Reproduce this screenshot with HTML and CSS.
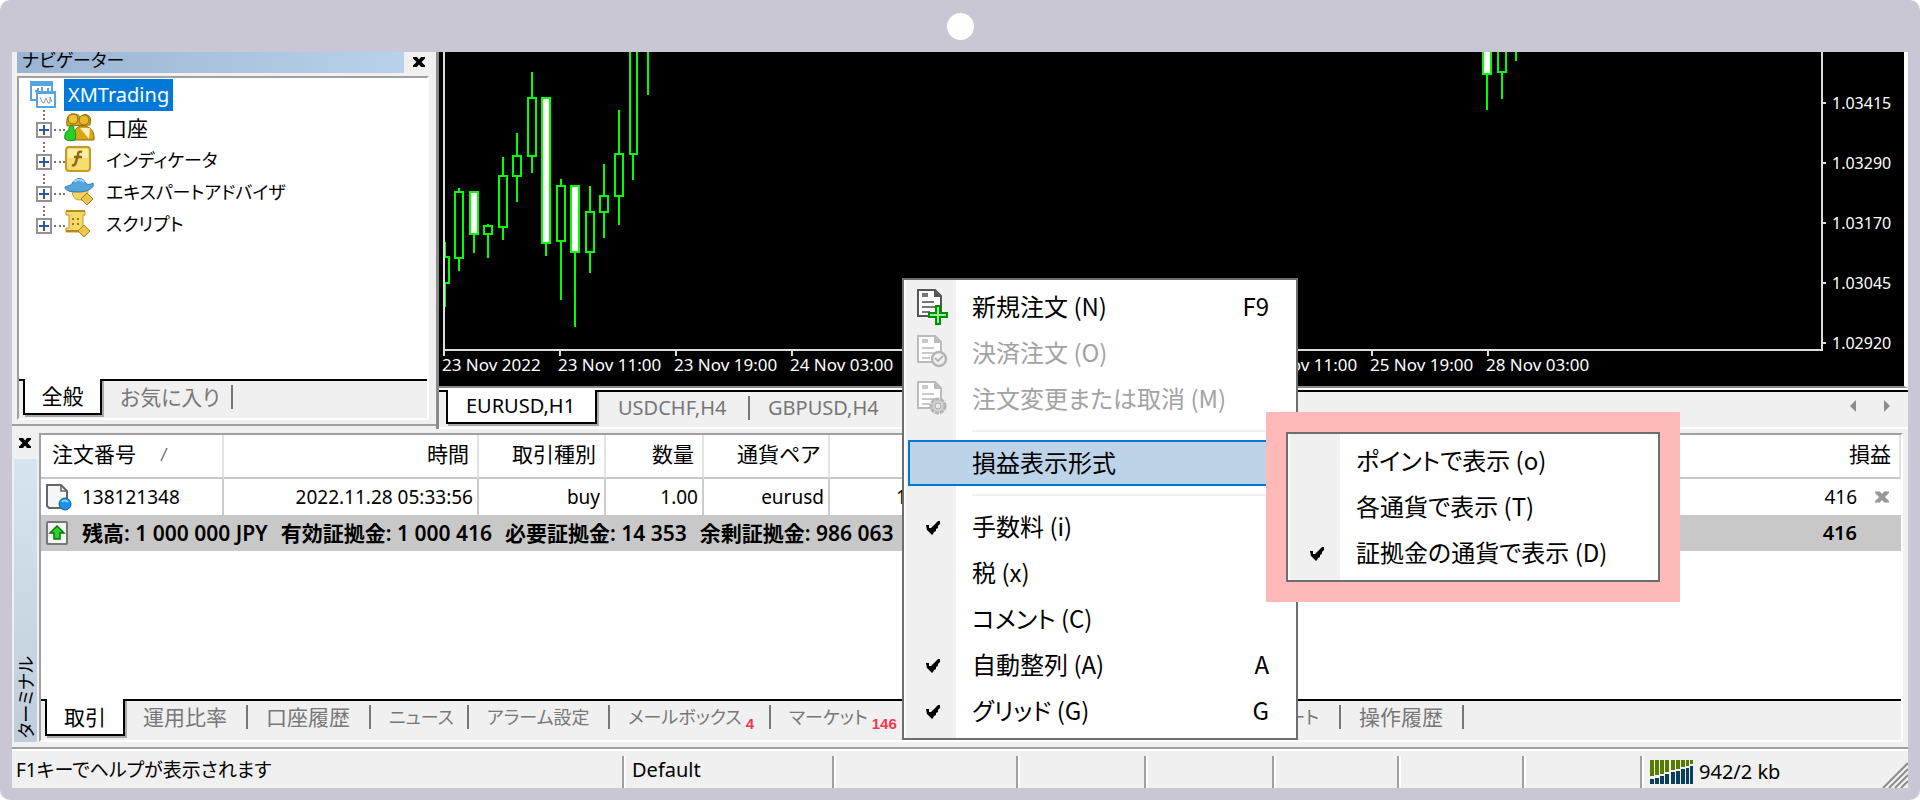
FILE: index.html
```html
<!DOCTYPE html>
<html lang="ja">
<head>
<meta charset="utf-8">
<title>XMTrading</title>
<meta name="viewport" content="width=device-width, initial-scale=1">
<link rel="stylesheet" href="styles.css">
</head>
<body>
<svg class="defs" aria-hidden="true">
  <symbol id="check" viewBox="0 0 16 16"><path d="M1 6h3v3h2l7-7h2v3l-2 2v2l-2 1v2l-2 1-1 2-1 1-2-2-1-1-2-2z" fill="#000"/></symbol>
  <symbol id="cross" viewBox="0 0 12 10"><path d="M0 0h4l2 2.500 2-2.500h4v1.500L8.500 5l3.500 3.500V10H8L6 7.500 4 10H0V8.500L3.500 5 0 1.500z" fill="currentColor"/></symbol>
  <symbol id="doc" viewBox="0 0 32 36">
    <path d="M1 1h17l6 6v20H1z" fill="#fff" stroke="currentColor" stroke-width="2"/>
    <path d="M17 1v7h7z" fill="currentColor"/>
    <path d="M5 4h6v4H5zM5 12h12v2H5zM5 17h14v2H5zM5 22h8v2H5z" fill="currentColor" opacity=".8"/>
  </symbol>
</svg>
<div class="device">
  <div class="camera-bar"><span class="camera"></span></div>
  <main class="screen">
    <div class="workspace">
      <section class="navigator">
        <header class="nav-head">
          <h2 class="nav-title">ナビゲーター</h2>
          <button class="close" type="button" aria-label="閉じる"><svg width="12" height="10"><use href="#cross"/></svg></button>
        </header>
        <div class="nav-panel">
          <ul class="tree">
            <li class="tree-root">
              <svg class="tree-icon" width="28" height="28" viewBox="0 0 28 28"><path d="M1 2h21v17H1z" fill="#fff" stroke="#55a5de" stroke-width="2"/><path d="M1 1h21v3H1zM5 10h3V7M12 6v5h2M18 7v3" fill="none" stroke="#55a5de" stroke-width="2"/><path d="M7 11h18v15H7z" fill="#fff" stroke="#55a5de" stroke-width="2"/><path d="M6 10h20v3H6z" fill="#55a5de"/><path d="M10 16l2 5 2 1 2-5 2 5h2v-6l2 5" fill="none" stroke="#7f99bd" stroke-width="1"/></svg>
              <span class="selected">XMTrading</span>
            </li>
            <li class="tree-item">
              <button class="expander" type="button" aria-label="展開"></button>
              <svg class="tree-icon" width="32" height="30" viewBox="0 0 32 30"><g stroke="#8f6c0b" stroke-width="1"><path d="M3 13C2 5 4 1 9 1s7 2 8 4c1-3 3-4 6-3 4 1 4 5 3 10z" fill="#d9a514"/><circle cx="9" cy="6" r="5" fill="#edc235"/><circle cx="20" cy="7" r="5" fill="#e8b92b"/><path d="M10 27c-1-9 2-14 9-14s12 5 11 14z" fill="#d9a514"/><path d="M16 15l9 11 1-11z" fill="#fff0bd" stroke="none"/></g><path d="M1 26c-1-5 1-8 4-9-1-6 6-6 5 0 2 2 2 6 1 10-4 1-8 1-10-1z" fill="#25cf25" stroke="#159415"/></svg>
              <span class="kanji">口座</span>
            </li>
            <li class="tree-item">
              <button class="expander" type="button" aria-label="展開"></button>
              <svg class="tree-icon" width="32" height="30" viewBox="0 0 32 30"><rect x="2" y="2" width="24" height="24" rx="3" fill="#f4dc70" stroke="#c79a26" stroke-width="2"/><path d="M4 4h20v9H4z" fill="#faeda5"/><path d="M18 7c-3-1-4 0-4 3l-2 7c-1 3-2 4-4 3M10 12h8" fill="none" stroke="#8b6914" stroke-width="2.500"/></svg>
              <span>インディケータ</span>
            </li>
            <li class="tree-item">
              <button class="expander" type="button" aria-label="展開"></button>
              <svg class="tree-icon" width="32" height="30" viewBox="0 0 32 30"><path d="M8 12c0 8 3 11 8 11s8-4 8-10z" fill="#f4d45b" stroke="#c79a26"/><path d="M1 10c5-2 6-1 8-5s10-5 12 0c2 3 4 3 8 1 2 5-6 9-14 9S1 14 1 10z" fill="#54a6df" stroke="#2e75ae"/><path d="M10 5c2-3 8-3 10 0" stroke="#a6d5f4" fill="none" stroke-width="2"/><path d="M23 16l6 6-6 6-6-6z" fill="#edc74d" stroke="#a77e18"/></svg>
              <span>エキスパートアドバイザ</span>
            </li>
            <li class="tree-item">
              <button class="expander" type="button" aria-label="展開"></button>
              <svg class="tree-icon" width="32" height="30" viewBox="0 0 32 30"><path d="M2 2h19v4h-2v13h3v4H2v-4h3V6H2z" fill="#f4d969" stroke="#c79a26"/><path d="M2 2h19M2 22h18" stroke="#b88a1e" stroke-width="2"/><path d="M8 9h2v2H8zm5 0h2v2h-2zm-5 5h2v2H8zm5 0h2v2h-2z" fill="#9c7720"/><path d="M20 16l6 6-6 6-6-6z" fill="#edc74d" stroke="#a77e18"/></svg>
              <span>スクリプト</span>
            </li>
          </ul>
          <nav class="tabs nav-tabs">
            <button class="tab active" type="button">全般</button>
            <button class="tab favourites" type="button">お気に入り</button>
          </nav>
        </div>
      </section>

      <section class="chart">
        <div class="chart-area">
          <div class="plot-column">
            <svg class="plot" role="img" aria-label="EURUSD,H1">
              <g class="wick">
                <path d="M0 190v15M0 231v24M14 136v4M14 206v13M29 182v19M43 172v2M43 182v24M58 105v19M58 175v13M72 81v23M72 124v26M87 20v26M87 104v17M101 191v13M116 127v7M116 189v59M130 200v75M145 134v26M145 200v21M159 112v32M159 160v26M174 58v44M174 144v29M188 102v26M203 0v43M1042 22v36M1057 20v27M1071 0v9"/>
              </g>
              <g class="body up">
                <path d="M-5 205h9v26h-9zM10 140h8v66h-8zM39 174h8v8h-8zM54 124h8v51h-8zM68 104h8v20h-8zM83 46h8v58h-8zM112 134h8v55h-8zM141 160h8v40h-8zM155 144h8v16h-8zM170 102h8v42h-8zM185-5h7v107h-7zM1053-5h8v25h-8z"/>
              </g>
              <g class="body down">
                <path d="M25 140h8v42h-8zM97 46h8v145h-8zM126 134h8v66h-8zM1038-5h8v27h-8z"/>
              </g>
            </svg>
          </div>
          <ul class="prices">
            <li>1.03415</li><li>1.03290</li><li>1.03170</li><li>1.03045</li><li>1.02920</li>
          </ul>
        </div>
        <ul class="dates">
          <li>23 Nov 2022</li><li>23 Nov 11:00</li><li>23 Nov 19:00</li><li>24 Nov 03:00</li><li></li><li></li><li></li><li>25 Nov 11:00</li><li>25 Nov 19:00</li><li>28 Nov 03:00</li>
        </ul>
        <nav class="tabs chart-tabs">
          <button class="tab active" type="button">EURUSD,H1</button>
          <button class="tab" type="button">USDCHF,H4</button>
          <button class="tab" type="button">GBPUSD,H4</button>
          <span class="scroll">
            <button type="button" aria-label="左へ"><svg width="8" height="12"><path d="M7 0v12L1 6z" fill="#8c8c8c"/></svg></button>
            <button type="button" aria-label="右へ"><svg width="8" height="12"><path d="M1 0v12l6-6z" fill="#8c8c8c"/></svg></button>
          </span>
        </nav>
      </section>
    </div>

    <section class="terminal">
      <header class="terminal-side">
        <button class="close" type="button" aria-label="閉じる"><svg width="12" height="10"><use href="#cross"/></svg></button>
        <h2 class="terminal-title"><span>ターミナル</span></h2>
      </header>
      <div class="terminal-panel">
        <table class="orders">
          <colgroup><col class="c-order"><col class="c-time"><col class="c-type"><col class="c-size"><col class="c-symbol"><col class="c-price"><col><col class="c-close"></colgroup>
          <thead>
            <tr><th class="first">注文番号<svg class="sort" width="8" height="14"><path d="M7 0L1 13" stroke="#777" stroke-width="1.500"/></svg></th><th>時間</th><th>取引種別</th><th>数量</th><th>通貨ペア</th><th class="plain"></th><th class="profit" colspan="2">損益</th></tr>
          </thead>
          <tbody>
            <tr class="order">
              <td class="first"><span class="cell"><svg width="26" height="28" viewBox="0 0 26 28"><path d="M1 2h14l6 6v17H3l-2-2z" fill="#f6f6f6" stroke="#666" stroke-width="2"/><path d="M15 2v6h6" fill="none" stroke="#666" stroke-width="1.500"/><circle cx="19" cy="21" r="6" fill="#1c91ea" stroke="#0b5d9f"/><path d="M16 19c1-2 4-2 6 0" stroke="#8bd0ff" stroke-width="2" fill="none"/></svg>138121348</span></td>
              <td>2022.11.28 05:33:56</td><td>buy</td><td>1.00</td><td>eurusd</td><td class="price">1.04025</td><td class="amount">416</td>
              <td class="close-cell"><button class="close muted" type="button" aria-label="決済"><svg width="14" height="12" viewBox="0 0 12 10"><use href="#cross"/></svg></button></td>
            </tr>
            <tr class="balance">
              <td class="first" colspan="6"><span class="cell"><svg width="26" height="28" viewBox="0 0 26 28"><rect x="1" y="3" width="20" height="22" rx="1" fill="#f5f5f5" stroke="#777" stroke-width="2"/><path d="M11 7l7 7h-4v6H8v-6H4z" fill="#2bd52b" stroke="#087408" stroke-width="1.500"/></svg><span>残高: 1 000 000 JPY</span><span>有効証拠金: 1 000 416</span><span>必要証拠金: 14 353</span><span>余剰証拠金: 986 063</span></span></td>
              <td class="amount">416</td><td></td>
            </tr>
          </tbody>
        </table>
        <nav class="tabs terminal-tabs">
          <button class="tab active" type="button">取引</button>
          <button class="tab w-rate" type="button">運用比率</button>
          <button class="tab w-rate" type="button">口座履歴</button>
          <button class="tab kana w-news" type="button">ニュース</button>
          <button class="tab kana w-alarm" type="button">アラーム設定</button>
          <button class="tab kana w-mail" type="button">メールボックス<sub>4</sub></button>
          <button class="tab kana w-market" type="button">マーケット<sub>146</sub></button>
          <button class="tab kana w-expert" type="button">エキスパート</button>
          <button class="tab w-history" type="button">操作履歴</button>
        </nav>
      </div>
    </section>

    <footer class="status">
      <span class="s-help">F1キーでヘルプが表示されます</span>
      <span class="s-profile">Default</span>
      <span class="s-open"></span>
      <span class="s-wide"></span>
      <span class="s-wide"></span>
      <span class="s-cell"></span>
      <span class="s-cell"></span>
      <span class="s-last"></span>
      <span class="s-net">
        <svg width="44" height="24" viewBox="0 0 44 24"><path d="M0 0h4v16H0zM5 0h4v15H5zM10 0h4v14h-4zM15 0h4v12h-4zM21 0h4v10h-4zM26 0h4v9h-4zM31 0h4v7h-4zM36 0h3v6h-3zM40 0h3v4h-3z" fill="#587a00"/><path d="M0 19h4v5H0zM5 18h4v6H5zM10 16h4v8h-4zM15 14h4v10h-4zM21 12h4v12h-4zM26 11h4v13h-4zM31 9h4v15h-4zM36 8h3v16h-3zM40 6h3v18h-3z" fill="#0b3d5c"/></svg>
        942/2 kb
      </span>
      <svg class="grip" width="26" height="26" viewBox="0 0 26 26"><path d="M1 26L26 1M7 26L26 7M13 26l13-13M19 26l7-7" stroke="#8c8c8c" stroke-width="2"/></svg>
    </footer>

    <div class="menu context-menu" role="menu">
      <button class="item" role="menuitem" type="button"><span class="mark"><svg class="dark" width="32" height="36" viewBox="0 0 32 36"><use href="#doc" width="32" height="36"/><path d="M19 17h4v7h7v4h-7v7h-4v-7h-7v-4h7z" fill="#8cf58c" stroke="#078a07" stroke-width="2"/></svg></span><span class="label">新規注文 (N)</span><kbd>F9</kbd></button>
      <button class="item" role="menuitem" type="button" disabled><span class="mark"><svg width="32" height="36" viewBox="0 0 32 36"><use href="#doc" width="32" height="36"/><circle cx="22" cy="24" r="7" fill="#f2f2f2" stroke="#b4b4b4" stroke-width="2.500"/><path d="M18 23l3 3 5-5" fill="none" stroke="#b4b4b4" stroke-width="2"/></svg></span><span class="label">決済注文 (O)</span></button>
      <button class="item" role="menuitem" type="button" disabled><span class="mark"><svg width="32" height="36" viewBox="0 0 32 36"><use href="#doc" width="32" height="36"/><circle cx="21" cy="25" r="7" fill="#d2d2d2" stroke="#b4b4b4" stroke-width="3" stroke-dasharray="4 1"/><circle cx="21" cy="25" r="3" fill="#e8e8e8" stroke="#aaa"/></svg></span><span class="label">注文変更または取消 (M)</span></button>
      <hr>
      <button class="item highlighted" role="menuitem" type="button" aria-haspopup="true"><span class="mark"></span><span class="label">損益表示形式</span></button>
      <hr>
      <button class="item" role="menuitemcheckbox" aria-checked="true" type="button"><span class="mark"><svg width="16" height="16"><use href="#check"/></svg></span><span class="label">手数料 (i)</span></button>
      <button class="item" role="menuitemcheckbox" aria-checked="false" type="button"><span class="mark"></span><span class="label">税 (x)</span></button>
      <button class="item" role="menuitemcheckbox" aria-checked="false" type="button"><span class="mark"></span><span class="label">コメント (C)</span></button>
      <button class="item" role="menuitemcheckbox" aria-checked="true" type="button"><span class="mark"><svg width="16" height="16"><use href="#check"/></svg></span><span class="label">自動整列 (A)</span><kbd>A</kbd></button>
      <button class="item" role="menuitemcheckbox" aria-checked="true" type="button"><span class="mark"><svg width="16" height="16"><use href="#check"/></svg></span><span class="label">グリッド (G)</span><kbd>G</kbd></button>
    </div>

    <div class="callout">
      <div class="menu" role="menu">
        <button class="item" role="menuitemradio" aria-checked="false" type="button"><span class="mark"></span><span class="label">ポイントで表示 (o)</span></button>
        <button class="item" role="menuitemradio" aria-checked="false" type="button"><span class="mark"></span><span class="label">各通貨で表示 (T)</span></button>
        <button class="item" role="menuitemradio" aria-checked="true" type="button"><span class="mark"><svg width="16" height="16"><use href="#check"/></svg></span><span class="label">証拠金の通貨で表示 (D)</span></button>
      </div>
    </div>
  </main>
</div>
</body>
</html>
```

FILE: styles.css
```css
* { box-sizing: border-box; }

body {
  margin: 0;
  background: #fff;
  color: #000;
  font: 20px/24px "Noto Sans", "Noto Sans CJK JP", sans-serif;
  font-feature-settings: "palt";
}

button {
  margin: 0;
  padding: 0;
  border: 0;
  background: none;
  color: inherit;
  font: inherit;
  font-feature-settings: inherit;
  text-align: left;
}

h2, ul { margin: 0; padding: 0; font: inherit; list-style: none; }

.defs { position: absolute; width: 0; height: 0; }

.device {
  display: flex;
  flex-direction: column;
  min-height: 100vh;
  padding: 0 12px 12px;
  border-radius: 10px;
  background: #c8c7d3;
}

.camera-bar { display: flex; align-items: center; justify-content: center; height: 52px; }
.camera { width: 27px; height: 27px; border-radius: 50%; background: #fff; }

.screen {
  position: relative;
  display: flex;
  flex: 1;
  flex-direction: column;
  background: #f0f0f0;
}

.workspace { display: flex; }

/* Navigator */
.navigator {
  display: flex;
  flex: none;
  flex-direction: column;
  width: 424px;
  margin-bottom: 3px;
  padding-left: 5px;
  border-bottom: 2px solid #a0a0a0;
}

.nav-head { display: flex; height: 24px; }

.nav-title {
  width: 387px;
  height: 21px;
  overflow: hidden;
  padding-left: 5px;
  background: linear-gradient(90deg, #99b4d1, #b9d1ea);
  font-size: 18px;
  line-height: 16px;
}

.close { display: flex; align-items: center; justify-content: center; color: #000; }
.nav-head .close { width: 30px; height: 20px; }
.close.muted { width: 43px; padding-left: 4px; color: #999; }

.nav-panel {
  display: flex;
  flex: 1;
  flex-direction: column;
  margin: 0 7px 4px 0;
  border: 2px solid #fff;
  border-top-color: #a0a0a0;
  border-left-color: #a0a0a0;
}

.tree { flex: 1; background: #fff; font-size: 18px; }
.tree-root { display: flex; align-items: center; height: 34px; padding-left: 11px; gap: 6px; }
.selected { height: 32px; padding: 0 4px; background: #0078d7; color: #fff; font-size: 20px; line-height: 31px; }
.kanji { font-size: 21px; }

.tree-item { position: relative; display: flex; align-items: center; height: 32px; padding-left: 17px; }
.tree-item .tree-icon { margin: 0 10px 0 12px; }
.tree-item::before,
.tree-item::after { content: ""; position: absolute; border: 0 dotted #777; }
.tree-item::before { top: -2px; left: 24px; height: 14px; border-left-width: 2px; }
.tree-item::after { top: 17px; left: 35px; width: 11px; border-top-width: 2px; }

.expander {
  z-index: 1;
  width: 16px;
  height: 16px;
  margin-top: 4px;
  border: 2px solid #929292;
  background:
    linear-gradient(#33559c, #33559c) center / 10px 2px no-repeat,
    linear-gradient(#33559c, #33559c) center / 2px 10px no-repeat,
    #fff;
}

/* Tab strips */
.tabs { display: flex; border-top: 2px solid #000; background: #f0f0f0; color: #777; }
.tab { display: flex; flex: none; align-items: center; height: 31px; padding-left: 18px; white-space: nowrap; }
.tab::after { content: ""; width: 2px; height: 24px; margin-left: auto; background: #777; }
.tab.kana { font-size: 18px; }
.tab.active {
  justify-content: center;
  height: 36px;
  margin-top: -2px;
  padding: 0;
  border: 2px solid #000;
  border-top: 0;
  background: #fff;
  box-shadow: 2px 2px 0 #aaa;
  color: #000;
}
.tab.active::after { content: none; }

.nav-tabs { height: 39px; padding-left: 4px; font-size: 21px; }
.nav-tabs .active { width: 79px; }
.favourites { width: 131px; }

.chart-tabs { height: 39px; padding-left: 7px; border-bottom: 2px solid #fff; }
.chart-tabs .active { width: 151px; height: 34px; padding-right: 2px; }
.chart-tabs .tab:not(.active) { width: 153px; padding-left: 21px; }
.chart-tabs .tab:nth-of-type(3) { padding-left: 18px; }
.chart-tabs .tab:nth-of-type(3)::after { content: none; }
.scroll { display: flex; gap: 26px; margin-left: auto; padding: 8px 17px 0 0; }
.scroll button { display: flex; height: 12px; }

/* Chart */
.chart { display: flex; flex: 1; flex-direction: column; min-width: 0; border-left: 3px solid #8a8a8a; }
.chart-area { display: flex; padding-left: 4px; background: #000; color: #fff; border-right: 4px solid #fff; }
.plot-column { flex: 1; min-width: 0; border: 2px solid #ddd; border-top: 0; }
.plot { display: block; width: 100%; height: 297px; }
.wick { fill: none; stroke: #0f0; stroke-width: 2; }
.body { stroke: #0f0; stroke-width: 2; }
.body.up { fill: #000; }
.body.down { fill: #fff; }

.prices { width: 81px; padding-top: 21px; font-size: 16px; line-height: 60px; }
.prices li { display: flex; align-items: center; height: 60px; gap: 6px; }
.prices li::before { content: ""; width: 3px; height: 2px; background: #ddd; }
.prices li:last-child { margin-bottom: -30px; }

.dates {
  display: flex;
  overflow: hidden;
  margin-bottom: 2px;
  padding-left: 3px;
  border-right: 4px solid #fff;
  border-bottom: 2px solid #8a8a8a;
  background: #000;
  box-shadow: 0 2px 0 #fff;
  color: #fff;
  font-size: 17px;
  line-height: 18px;
}
.dates li { flex: none; width: 116px; height: 35px; white-space: nowrap; }
.dates li::before { content: ""; display: block; width: 2px; height: 5px; margin-left: 1px; background: #ddd; }

/* Terminal */
.terminal { display: flex; flex: 1; padding-top: 4px; padding-right: 5px; border-bottom: 5px solid #f0f0f0; }
.terminal-side { display: flex; flex: none; flex-direction: column; width: 27px; padding: 0 2px; }
.terminal-side .close { height: 26px; padding: 0 2px 6px 0; }
.terminal-title {
  display: flex;
  flex: 1;
  align-items: flex-end;
  justify-content: center;
  padding-bottom: 4px;
  background: linear-gradient(#d7e4f2, #bfcddb);
  font-size: 18px;
}
.terminal-title span { writing-mode: vertical-rl; text-orientation: sideways; transform: rotate(180deg); }

.terminal-panel {
  display: flex;
  flex: 1;
  flex-direction: column;
  min-width: 0;
  border: 2px solid #a0a0a0;
  border-right-color: #fff;
  border-bottom-color: #fff;
  background: #fff;
}

.orders { width: 100%; margin-bottom: auto; border-spacing: 0; table-layout: fixed; }
.c-order { width: 183px; }
.c-time { width: 255px; }
.c-type { width: 127px; }
.c-size { width: 98px; }
.c-symbol { width: 126px; }
.c-price { width: 127px; }
.c-close { width: 43px; }

.orders th {
  height: 44px;
  padding: 0 8px 4px 0;
  border-right: 2px solid #e3e3e3;
  border-bottom: 2px solid #c8c8c8;
  font-size: 21px;
  font-weight: 400;
  text-align: right;
}
.orders th.first { padding-left: 11px; text-align: left; }
.orders th.plain { border-right: 0; }
.sort { margin-left: 24px; }

.orders td { height: 36px; padding: 0 4px 0 0; text-align: right; white-space: nowrap; }
.order td { border-right: 2px solid #ccc; font-size: 19px; }
.order td.price, .order td.amount, .order td.close-cell { border-right: 0; }
.orders td.price { padding-left: 66px; text-align: left; }
.orders td.amount { padding-right: 1px; }
.orders td.close-cell { padding: 0; }
.orders td.first { padding-left: 5px; text-align: left; }
.cell { display: flex; align-items: center; }
.cell svg { margin-right: 10px; }
.balance { background: #c8c8c8; font-weight: 600; }
.balance .cell { font-size: 21px; }
.balance span + span { margin-left: 13px; }

.terminal-tabs { height: 41px; padding-left: 4px; font-size: 21px; }
.terminal-tabs .active { width: 80px; height: 37px; }
.terminal-tabs sub { align-self: flex-end; margin-left: 4px; color: #f2384c; font: bold 15px/16px "Liberation Sans", sans-serif; }
.w-rate { width: 123px; }
.w-news { width: 98px; }
.w-alarm { width: 141px; }
.w-mail { width: 161px; }
.w-market { width: 145px; }
.w-expert { width: 425px; justify-content: flex-end; }
.w-expert::after { margin-left: 20px; }
.w-history { width: 123px; }

/* Status bar */
.status {
  display: flex;
  align-items: flex-end;
  height: 41px;
  border-top: 2px solid #a0a0a0;
  box-shadow: inset 0 2px 0 #fff;
  white-space: nowrap;
}
.status span { flex: none; height: 32px; padding-left: 8px; border-left: 2px solid #a0a0a0; box-shadow: inset 2px 0 0 #fff; line-height: 28px; }
.status .s-help { width: 610px; padding-left: 4px; border: 0; box-shadow: none; font-size: 19px; }
.s-profile { width: 210px; }
.s-open { width: 184px; }
.s-wide { width: 128px; }
.s-cell { width: 125px; }
.s-last { width: 118px; }
.status .s-net { display: flex; align-items: center; gap: 5px; }
.grip { flex: none; margin-left: auto; }

/* Menus */
.menu {
  display: flex;
  flex-direction: column;
  padding: 4px 2px;
  border: 2px solid #6e6e6e;
  background: linear-gradient(90deg, transparent 2px, #f0f0f0 2px, #f0f0f0 52px, transparent 52px) #fff;
  font-family: "Noto Sans CJK JP", sans-serif;
  font-size: 24px;
}
.context-menu { position: absolute; top: 226px; left: 890px; width: 396px; }
.menu hr { width: 322px; height: 2px; margin: 8px 0 8px 66px; border: 0; background: #f0f0f0; }
.item { display: flex; align-items: center; height: 46px; padding-right: 25px; white-space: nowrap; }
.item:disabled { color: #a3a3a3; }
.item.highlighted { margin: 0 2px; border: 2px solid #0078d7; background: #bdd3e8; }
.item.highlighted .mark { width: 46px; }
.mark { display: flex; flex: none; align-items: center; justify-content: center; width: 50px; padding-left: 4px; color: #bbb; }
.dark { color: #555; }
.label { margin-left: 16px; padding-bottom: 2px; }
.item kbd { margin-left: auto; padding-bottom: 2px; font: inherit; }

.callout { position: absolute; top: 360px; left: 1254px; width: 414px; padding: 20px; background: #ffb9b9; }
```
